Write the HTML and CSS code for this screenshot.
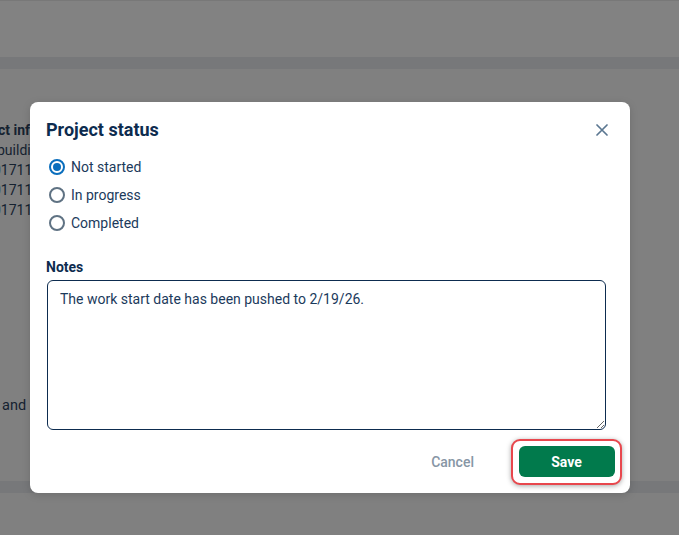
FILE: index.html
```html
<!DOCTYPE html>
<html lang="en">
<head>
<meta charset="utf-8">
<title>Project status</title>
<link rel="stylesheet" href="styles.css">
</head>
<body>
<div class="page">
  <div class="page-top"></div>
  <div class="page-band"></div>
  <div class="page-body">
    <div class="bg-lines">
      <div class="bg-line bg-strong bg-l1">Project info</div>
      <div class="bg-line bg-l2">building</div>
      <div class="bg-line bg-l3">01711000</div>
      <div class="bg-line bg-l3">01711000</div>
      <div class="bg-line bg-l3">01711000</div>
      <div class="bg-line bg-l6">and XYZ</div>
    </div>
  </div>
  <div class="page-band page-band-bottom"></div>
</div>

<div class="modal" role="dialog" aria-labelledby="modal-title">
  <div class="modal-head">
    <h2 id="modal-title" class="modal-title">Project status</h2>
    <button class="close-btn" aria-label="Close">
      <svg width="12" height="12" viewBox="0 0 12 12"><path d="M1 1L11 11M11 1L1 11" stroke="#5b7791" stroke-width="1.7" stroke-linecap="round"/></svg>
    </button>
  </div>
  <div class="radio-list">
    <label class="radio-row"><span class="radio radio-on"></span>Not started</label>
    <label class="radio-row"><span class="radio"></span>In progress</label>
    <label class="radio-row"><span class="radio"></span>Completed</label>
  </div>
  <div class="field-label">Notes</div>
  <textarea class="notes">The work start date has been pushed to 2/19/26.</textarea>
  <div class="modal-foot">
    <button class="btn-cancel">Cancel</button>
    <span class="highlight"><button class="btn-save">Save</button></span>
  </div>
</div>
</body>
</html>
```

FILE: styles.css
```css
html, body {
  margin: 0;
  padding: 0;
}
body {
  width: 679px;
  height: 535px;
  overflow: hidden;
  background: #808080;
  font-family: Roboto, "Liberation Sans", Arial, sans-serif;
  position: relative;
}
.page {
  display: flex;
  flex-direction: column;
  height: 535px;
}
.page-top {
  height: 56px;
  background: #828282;
  border-top: 1px solid #787878;
}
.page-band {
  height: 12px;
  background: #77787a;
}
.page-body {
  height: 412px;
  background: #808080;
  overflow: hidden;
}
.page-band-bottom {
  height: 12px;
}
.bg-lines {
  padding-top: 51px;
  color: #152230;
  font-size: 14px;
  white-space: nowrap;
}
.bg-line {
  height: 20px;
  line-height: 20px;
}
.bg-strong {
  font-weight: 700;
}
.bg-l1 {
  margin-left: -35px;
}
.bg-l2 {
  margin-left: -3px;
}
.bg-l3 {
  margin-left: -7px;
}
.bg-l6 {
  margin-top: 176px;
  margin-left: 2px;
  font-size: 14.5px;
}

.modal {
  position: absolute;
  left: 30px;
  top: 102px;
  width: 600px;
  height: 391px;
  box-sizing: border-box;
  background: #ffffff;
  border-radius: 8px;
  padding: 16px;
  display: flex;
  flex-direction: column;
  box-shadow: 0 2px 8px rgba(0,0,0,0.15);
}
.modal-head {
  display: flex;
  align-items: center;
  justify-content: space-between;
  height: 24px;
}
.modal-title {
  margin: 0;
  font-size: 18px;
  font-weight: 700;
  color: #0d2c4f;
  line-height: 24px;
}
.close-btn {
  border: 0;
  background: none;
  padding: 0;
  width: 20px;
  height: 20px;
  display: flex;
  align-items: center;
  justify-content: center;
  margin-right: 2px;
}
.radio-list {
  margin-top: 11px;
  display: flex;
  flex-direction: column;
}
.radio-row {
  display: flex;
  align-items: center;
  height: 28px;
  font-size: 14px;
  color: #1b3a5c;
  gap: 6px;
  padding-left: 3px;
}
.radio {
  width: 16px;
  height: 16px;
  box-sizing: border-box;
  border: 2px solid #5f7283;
  border-radius: 50%;
  position: relative;
  background: #fff;
}
.radio-on {
  border-color: #0a6ebd;
}
.radio-on::after {
  content: "";
  position: absolute;
  left: 2px;
  top: 2px;
  width: 8px;
  height: 8px;
  border-radius: 50%;
  background: #0a6ebd;
}
.field-label {
  margin-top: 20px;
  font-size: 14px;
  line-height: 20px;
  font-weight: 700;
  color: #0d2c4f;
}
.notes {
  margin: 3px 0 0 1px;
  width: 559px;
  height: 150px;
  box-sizing: border-box;
  border: 1px solid #0d2c4f;
  border-radius: 6px;
  padding: 8px 12px;
  font-family: Roboto, "Liberation Sans", Arial, sans-serif;
  font-size: 14px;
  line-height: 20px;
  color: #1b3a5c;
  outline: none;
  resize: both;
}
.modal-foot {
  margin-top: 16px;
  display: flex;
  justify-content: flex-end;
  align-items: center;
  gap: 30px;
}
.btn-cancel {
  border: 0;
  background: none;
  font-family: Roboto, "Liberation Sans", Arial, sans-serif;
  font-size: 14px;
  font-weight: 500;
  color: #8796a5;
  padding: 0 15px;
  height: 31px;
}
.highlight {
  display: inline-flex;
  padding: 5.5px;
  margin: -8px;
  border: 2.5px solid #e8474d;
  border-radius: 9px;
  background: #fff;
  box-shadow: 0 1px 5px rgba(0,0,0,0.35);
}
.btn-save {
  width: 96px;
  height: 31px;
  border: 0;
  border-radius: 6px;
  background: #017a4c;
  color: #ffffff;
  font-family: Roboto, "Liberation Sans", Arial, sans-serif;
  font-size: 14px;
  font-weight: 700;
}
```
